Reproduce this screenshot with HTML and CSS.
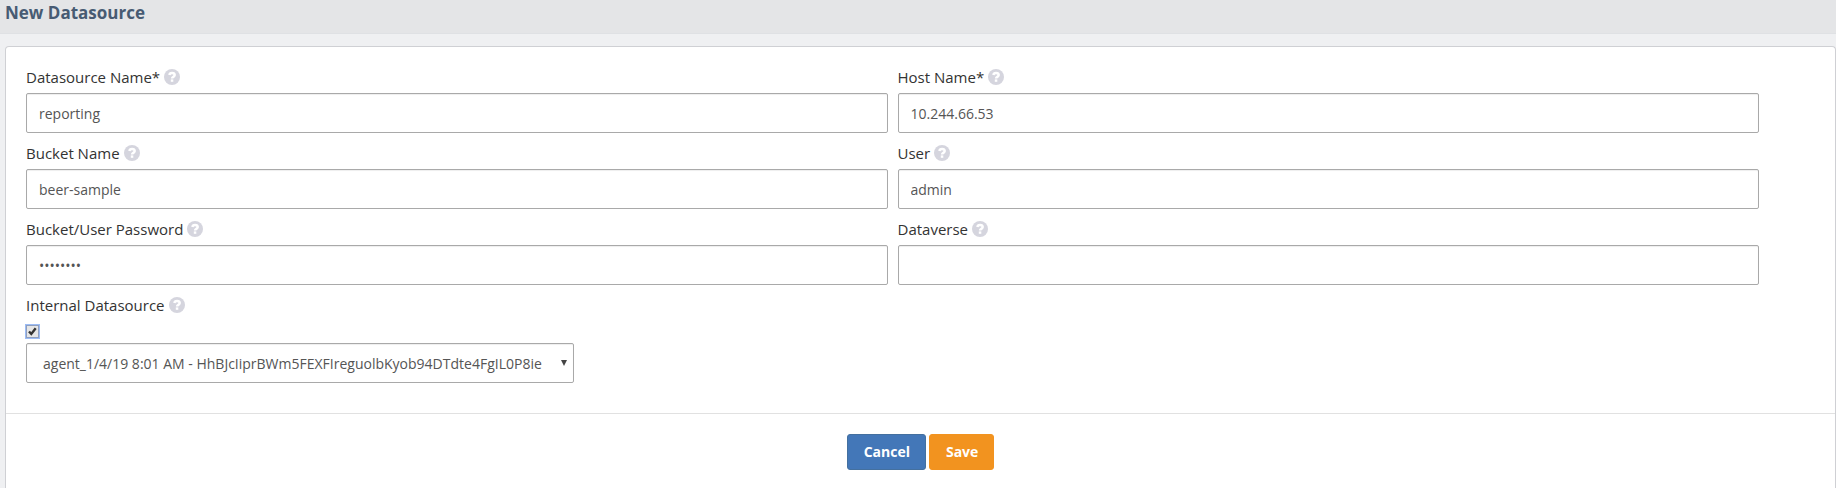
FILE: index.html
```html
<!DOCTYPE html>
<html lang="en">
<head>
<meta charset="utf-8">
<title>New Datasource</title>
<link rel="stylesheet" href="styles.css">
</head>
<body>
<svg class="defs" aria-hidden="true">
  <symbol id="help" viewBox="0 0 16 16">
    <circle cx="8" cy="8" r="8" fill="#d5d5de"/>
    <path d="M5.400 6C5.600 4.600 6.700 4 8 4c1.600 0 2.700.8 2.700 2.100 0 1.800-2.600 1.600-2.600 3.300" fill="none" stroke="#fff" stroke-width="2.500"/>
    <rect x="6.800" y="10.400" width="2.500" height="2.400" fill="#fff"/>
  </symbol>
</svg>
<header class="page-header"><h1 class="page-title">New Datasource</h1></header>
<main class="page-body">
  <form class="card">
    <div class="fields">
      <div class="field">
        <div class="caption"><label for="name">Datasource Name*</label><svg class="help"><use href="#help"/></svg></div>
        <input class="control" id="name" type="text" value="reporting">
      </div>
      <div class="field">
        <div class="caption"><label for="host">Host Name*</label><svg class="help"><use href="#help"/></svg></div>
        <input class="control" id="host" type="text" value="10.244.66.53">
      </div>
      <div class="field">
        <div class="caption"><label for="bucket">Bucket Name</label><svg class="help"><use href="#help"/></svg></div>
        <input class="control" id="bucket" type="text" value="beer-sample">
      </div>
      <div class="field">
        <div class="caption"><label for="user">User</label><svg class="help"><use href="#help"/></svg></div>
        <input class="control" id="user" type="text" value="admin">
      </div>
      <div class="field">
        <div class="caption"><label for="password">Bucket/User Password</label><svg class="help"><use href="#help"/></svg></div>
        <input class="control" id="password" type="password" value="password">
      </div>
      <div class="field">
        <div class="caption"><label for="dataverse">Dataverse</label><svg class="help"><use href="#help"/></svg></div>
        <input class="control" id="dataverse" type="text">
      </div>
      <div class="field">
        <div class="caption"><label for="internal">Internal Datasource</label><svg class="help"><use href="#help"/></svg></div>
        <div class="tick">
          <input class="tick-input" id="internal" type="checkbox" checked>
          <svg class="tick-mark" viewBox="0 0 13 13" aria-hidden="true"><path d="M3 6.500 5.300 9 9.700 3.300" fill="none" stroke="#333" stroke-width="2.400"/></svg>
        </div>
        <div class="picker">
          <select class="control picker-select" aria-label="Agent">
            <option>agent_1/4/19 8:01 AM - HhBJcIiprBWm5FEXFIreguolbKyob94DTdte4FgIL0P8ie</option>
          </select>
          <svg class="picker-arrow" viewBox="0 0 6 6" aria-hidden="true"><path d="M0 0h6L3 6z" fill="#444"/></svg>
        </div>
      </div>
    </div>
    <footer class="actions">
      <button class="button cancel" type="button">Cancel</button>
      <button class="button save" type="submit">Save</button>
    </footer>
  </form>
</main>
</body>
</html>
```
FILE: styles.css
```css
* { box-sizing: border-box; }
html { height: 100%; }
body {
  display: flex;
  flex-direction: column;
  min-height: 100%;
  margin: 0;
  background: #eff0f2;
  color: #333;
  font-family: "Open Sans", sans-serif;
  font-size: 15px;
  line-height: 20px;
}
.defs { position: absolute; width: 0; height: 0; }
.page-header {
  padding: 3px 5px 10px;
  background: #e4e5e7;
  border-bottom: 1px solid #dfe1e4;
}
.page-title {
  margin: 0;
  color: #475b73;
  font-size: 17px;
  font-weight: 700;
  line-height: 20px;
}
.page-body {
  display: flex;
  flex: 1;
  flex-direction: column;
  padding: 12px 0 0 5px;
}
.card {
  flex: 1;
  background: #fff;
  border: 1px solid #cfd0d4;
  border-bottom: 0;
  border-radius: 4px 4px 0 0;
}
.fields {
  display: grid;
  grid-template-columns: 1fr 1fr;
  gap: 10px;
  padding: 20px 76px 30px 20px;
}
.caption {
  display: flex;
  align-items: center;
  gap: 4px;
  margin-bottom: 6px;
}
.help { width: 16px; height: 16px; }
.control {
  display: block;
  width: 100%;
  height: 40px;
  margin: 0;
  padding: 0 12px;
  background: #fff;
  border: 1px solid #a9a9a9;
  border-radius: 2px;
  box-shadow: inset 0 1px 1px #eee;
  color: #555;
  font: 14px "Open Sans", sans-serif;
}
.tick {
  display: grid;
  width: 13px;
  height: 13px;
  margin: 10px 0 5px;
}
.tick-input, .tick-mark { grid-area: 1 / 1; width: 13px; height: 13px; }
.tick-input {
  margin: 0;
  appearance: none;
  background: #e6e6e6;
  border: 1px solid #8f9fbe;
  box-shadow: 0 0 0 1px #9cbcf5;
}
.tick-mark { pointer-events: none; }
.picker { position: relative; width: fit-content; }
.picker-select {
  width: auto;
  padding: 0 31px 0 16px;
  appearance: none;
}
.picker-arrow {
  position: absolute;
  top: 17px;
  right: 7px;
  width: 6px;
  height: 6px;
  pointer-events: none;
}
.actions {
  display: flex;
  justify-content: center;
  gap: 3px;
  padding: 20px 0 18px;
  border-top: 1px solid #e1e1e1;
}
.button {
  height: 36px;
  padding: 0 15px 1px 16px;
  border: 1px solid;
  border-radius: 3px;
  color: #fff;
  font: 700 14px "Open Sans", sans-serif;
}
.cancel { background: #4377b8; border-color: #44709f; }
.save { background: #f2931f; border-color: #f2931f; }
```
